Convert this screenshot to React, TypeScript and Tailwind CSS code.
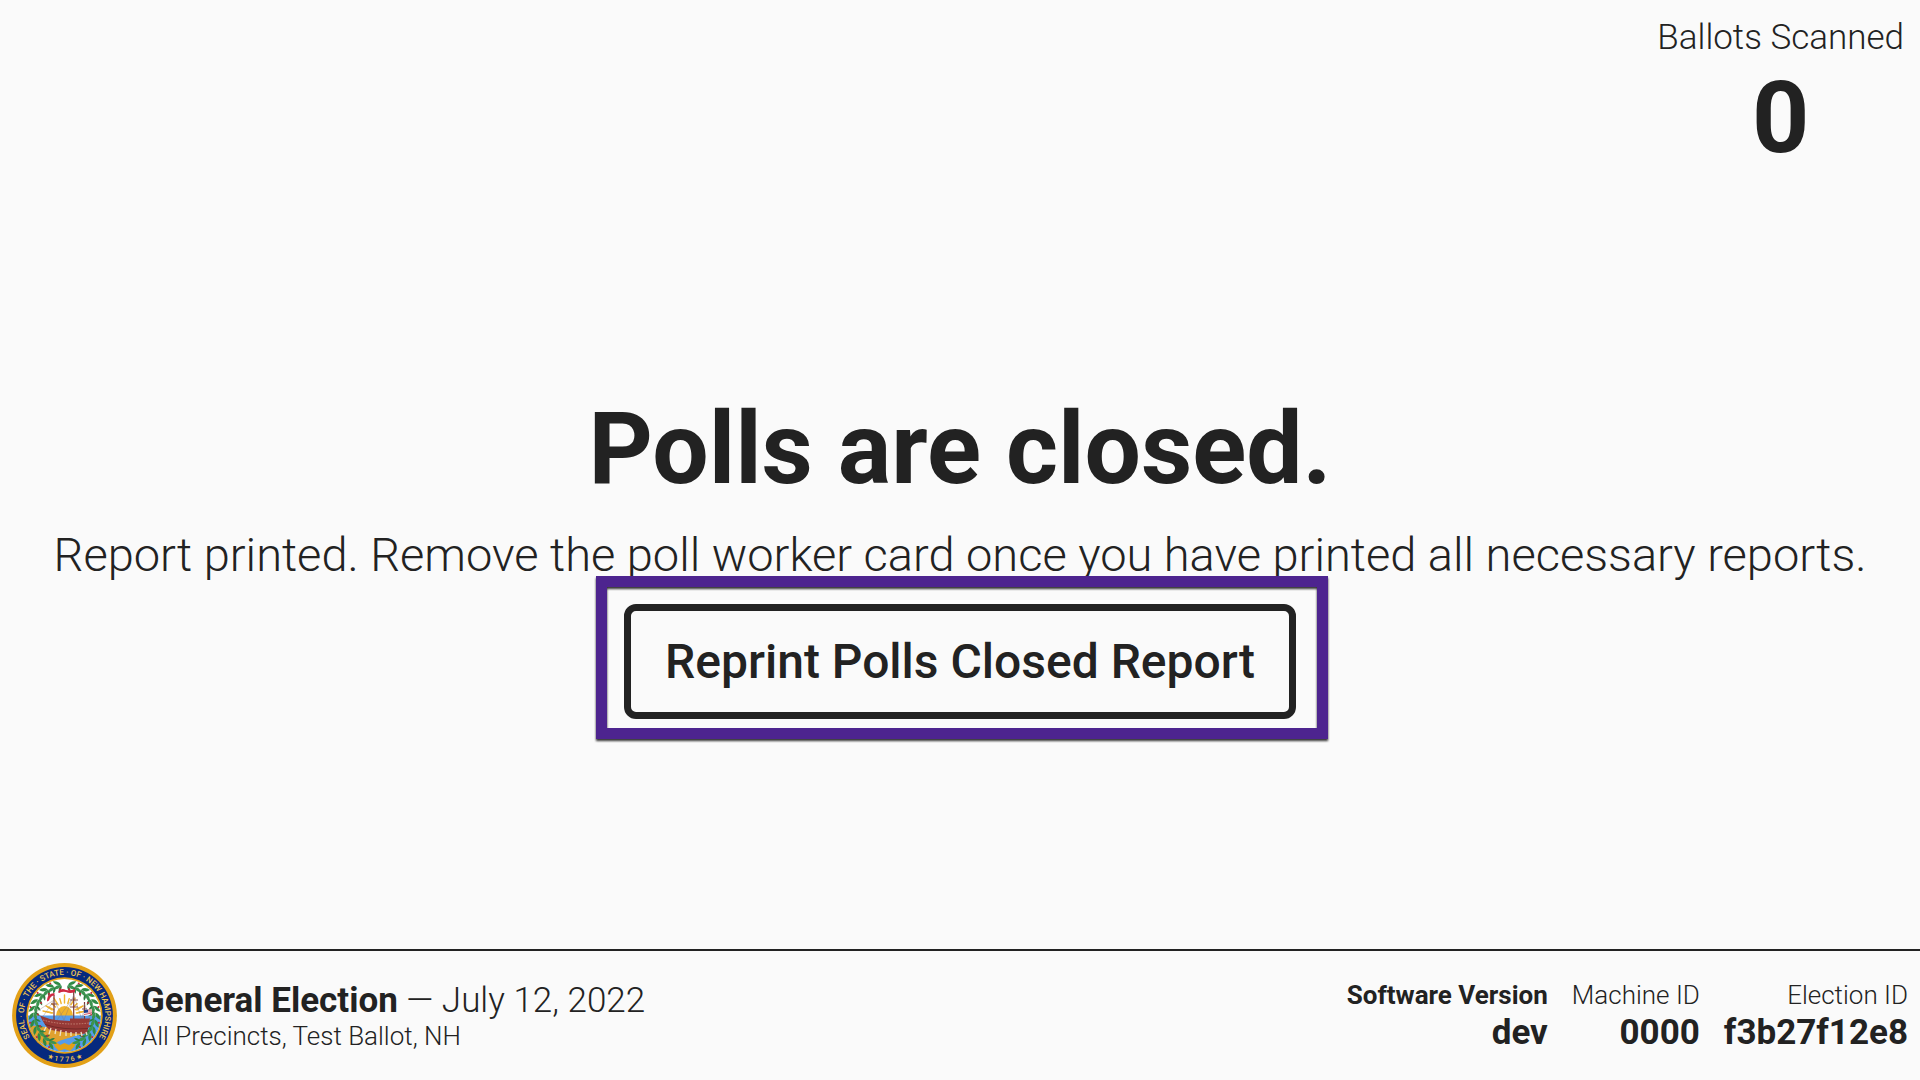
import React from "react";

const RAYS = [-80, -64, -48, -32, -16, 0, 16, 32, 48, 64, 80];

// Leaf positions along one side of the wreath, in degrees clockwise from the top.
const LEAVES = [15, 28, 41, 54, 67, 80, 93, 106, 119, 132, 145, 158];

function Wreath() {
  return (
    <g>
      {LEAVES.map((angle, i) => (
        <g key={angle} transform={`rotate(${angle} 52.5 52.5)`}>
          <path d="M48 22q1-5 7-5.500q-1 5-7 5.500z" fill="#2f8a45" />
          <path d="M47.500 22.500q5-2.500 8.500 1.500q-4.500 2.500-8.500-1.500z" fill="#3c9450" />
          <path d="M47.500 23q4 1 4.500 5q-4-1-4.500-5z" fill="#2b7d3f" />
          <circle cx={50} cy={i % 2 ? 17.5 : 26} r={1} fill="#c4283c" />
        </g>
      ))}
    </g>
  );
}

function StateSeal() {
  return (
    <svg viewBox="0 0 105 105" className="size-[105px] shrink-0" role="img" aria-label="Seal of the State of New Hampshire">
      <defs>
        <path id="seal-upper" d="M23.700 81.300A40.700 40.700 0 1 1 81.300 81.300" />
        <path id="seal-lower" d="M22 87.200A46.200 46.200 0 0 0 83 87.200" />
        <clipPath id="seal-field">
          <circle cx="52.5" cy="52.5" r="36.5" />
        </clipPath>
      </defs>
      <circle cx="52.5" cy="52.5" r="52.4" fill="#e2a017" />
      <circle cx="52.5" cy="52.5" r="48.4" fill="#06297e" />
      <circle cx="52.5" cy="52.5" r="38.2" fill="#e2a017" />
      <circle cx="52.5" cy="52.5" r="36.5" fill="#fff" />
      <g clipPath="url(#seal-field)">
        <g stroke="#f0b32c" strokeLinecap="round">
          {RAYS.map((angle, i) => (
            <path key={angle} d={i % 2 ? "M52.5 40V32" : "M52.5 40V35"} strokeWidth="1.4" transform={`rotate(${angle} 52.5 52)`} />
          ))}
          <path d="M40 47L34 43M40 50L31 48M65 47L71 43M65 50L74 48" strokeWidth="1.4" />
        </g>
        <path d="M44 53a8.500 10 0 0 1 17 0z" fill="#f0b32c" />
        <path d="M14 52.500H91V92H14z" fill="#559cec" />
        <path d="M14 62q14 1 20 2l40 4-4 4q-9 0-12 4-10 0-15 5l-10 1q-12-5-19-20z" fill="#dfa12f" />
        <path d="M60 74q10-4 17-2v9H46q2-4 14-7z" fill="#559cec" />
        <path d="M43 84q-3-5 1-5l4 3 4.500-2 4.500 2 4-3q4 0 1 5l-4 4-5.500-2-5.500 2z" fill="#e2a017" />
      </g>
      <Wreath />
      <g transform="matrix(-1 0 0 1 105 0)">
        <Wreath />
      </g>
      <g stroke="#7b3a37" fill="none">
        <path d="M42 32V57M61.700 28V58M72.500 39V58" strokeWidth="1.200" />
        <path d="M39 41h6M58 37h8M58 44h8M70 46h5" strokeWidth=".9" />
        <path d="M24 49L42 37L30 55M42 37L52 57L61.700 32L70 57L72.500 41L78 57M45 57L61.700 34" strokeWidth=".4" stroke="#8a7775" />
      </g>
      <path d="M28 52.500q8 3.500 16 4.500l14 1v-2.500h20l-3 15q-16 1-38-4-5-5-9-14z" fill="#963936" />
      <path d="M31 57q20 6 46 3" stroke="#d8a08e" strokeWidth=".7" fill="none" strokeDasharray="1.500 1.300" />
      <path d="M33 61.500q18 6 43 4" stroke="#63231f" strokeWidth=".7" fill="none" />
      <path d="M34 64l-2 4M39 65l-2 6M44 66l-1 5M49 67l-1 6M54 68v5M59 69v4M64 69v4M69 69l1 4M74 69l1 3" stroke="#eee3ce" strokeWidth="1.300" />
      <path d="M46 29q3-5 8-2 4 1 9-1v3q-5 2-9 0-3-1-7 1zM36 33q3-3 6.500-3v2.500q-4 0-5.500 5l-2 1q0-3 1-5.500z" fill="#cf2940" />
      <path d="M72 47l8-1v5l-8 2z" fill="#fff" />
      <path d="M72 47l4-.5v3L72 50z" fill="#203f8c" />
      <path d="M76 47h4M76 49h4M72 51.500l8-1.500" stroke="#c4283c" strokeWidth=".8" />
      <g fill="#f0c551" fontFamily="Roboto, sans-serif" fontWeight="500" textAnchor="middle">
        <text fontSize="8">
          <textPath href="#seal-upper" startOffset="50%">
            SEAL · OF · THE · STATE · OF · NEW HAMPSHIRE
          </textPath>
        </text>
        <text fontSize="7">
          <textPath href="#seal-lower" startOffset="50%">★ 1 7 7 6 ★</textPath>
        </text>
      </g>
    </svg>
  );
}

function VersionItem({ label, value, strong = false }: { label: string; value: string; strong?: boolean }) {
  return (
    <div className="text-right">
      <dt className={strong ? "text-[26px] leading-[34px] font-bold" : "text-[26px] leading-[34px]"}>{label}</dt>
      <dd className="text-[35px] leading-[42px] font-bold">{value}</dd>
    </div>
  );
}

export default function App() {
  return (
    <div className="flex min-h-screen flex-col bg-[#fafafa] font-['Roboto',sans-serif] font-light text-[#222]">
      <header className="flex justify-end px-4 pt-4">
        <div className="flex flex-col items-center gap-2">
          <span className="text-[35px] leading-11">Ballots Scanned</span>
          <span className="text-[100px] leading-none font-bold">0</span>
        </div>
      </header>

      <main className="flex flex-1 flex-col items-center justify-center text-center">
        <h1 className="text-[100px] leading-none font-bold">Polls are closed.</h1>
        <p className="mt-7 text-[47px] leading-14 whitespace-nowrap">
          Report printed. Remove the poll worker card once you have printed all necessary reports.
        </p>
        <div className="relative mt-[21px]">
          <button type="button" className="block rounded-xl border-7 border-[#222] px-[34px] py-[22px] text-[48px] leading-[57px] font-medium">
            Reprint Polls Closed Report
          </button>
          <div className="pointer-events-none absolute -top-7 -right-8 -bottom-5 -left-7 border-11 border-[#4d248f] drop-shadow-[0_2px_1px_rgba(0,0,0,0.8)]" />
        </div>
      </main>

      <footer className="flex items-center justify-between border-t-2 border-[#222] p-3">
        <div className="flex items-center gap-6">
          <StateSeal />
          <div>
            <p className="text-[35px] leading-10">
              <strong className="font-bold">General Election</strong> — July 12, 2022
            </p>
            <p className="text-[26px] leading-[30px]">All Precincts, Test Ballot, NH</p>
          </div>
        </div>
        <dl className="flex gap-6">
          <VersionItem label="Software Version" value="dev" strong />
          <VersionItem label="Machine ID" value="0000" />
          <VersionItem label="Election ID" value="f3b27f12e8" />
        </dl>
      </footer>
    </div>
  );
}
